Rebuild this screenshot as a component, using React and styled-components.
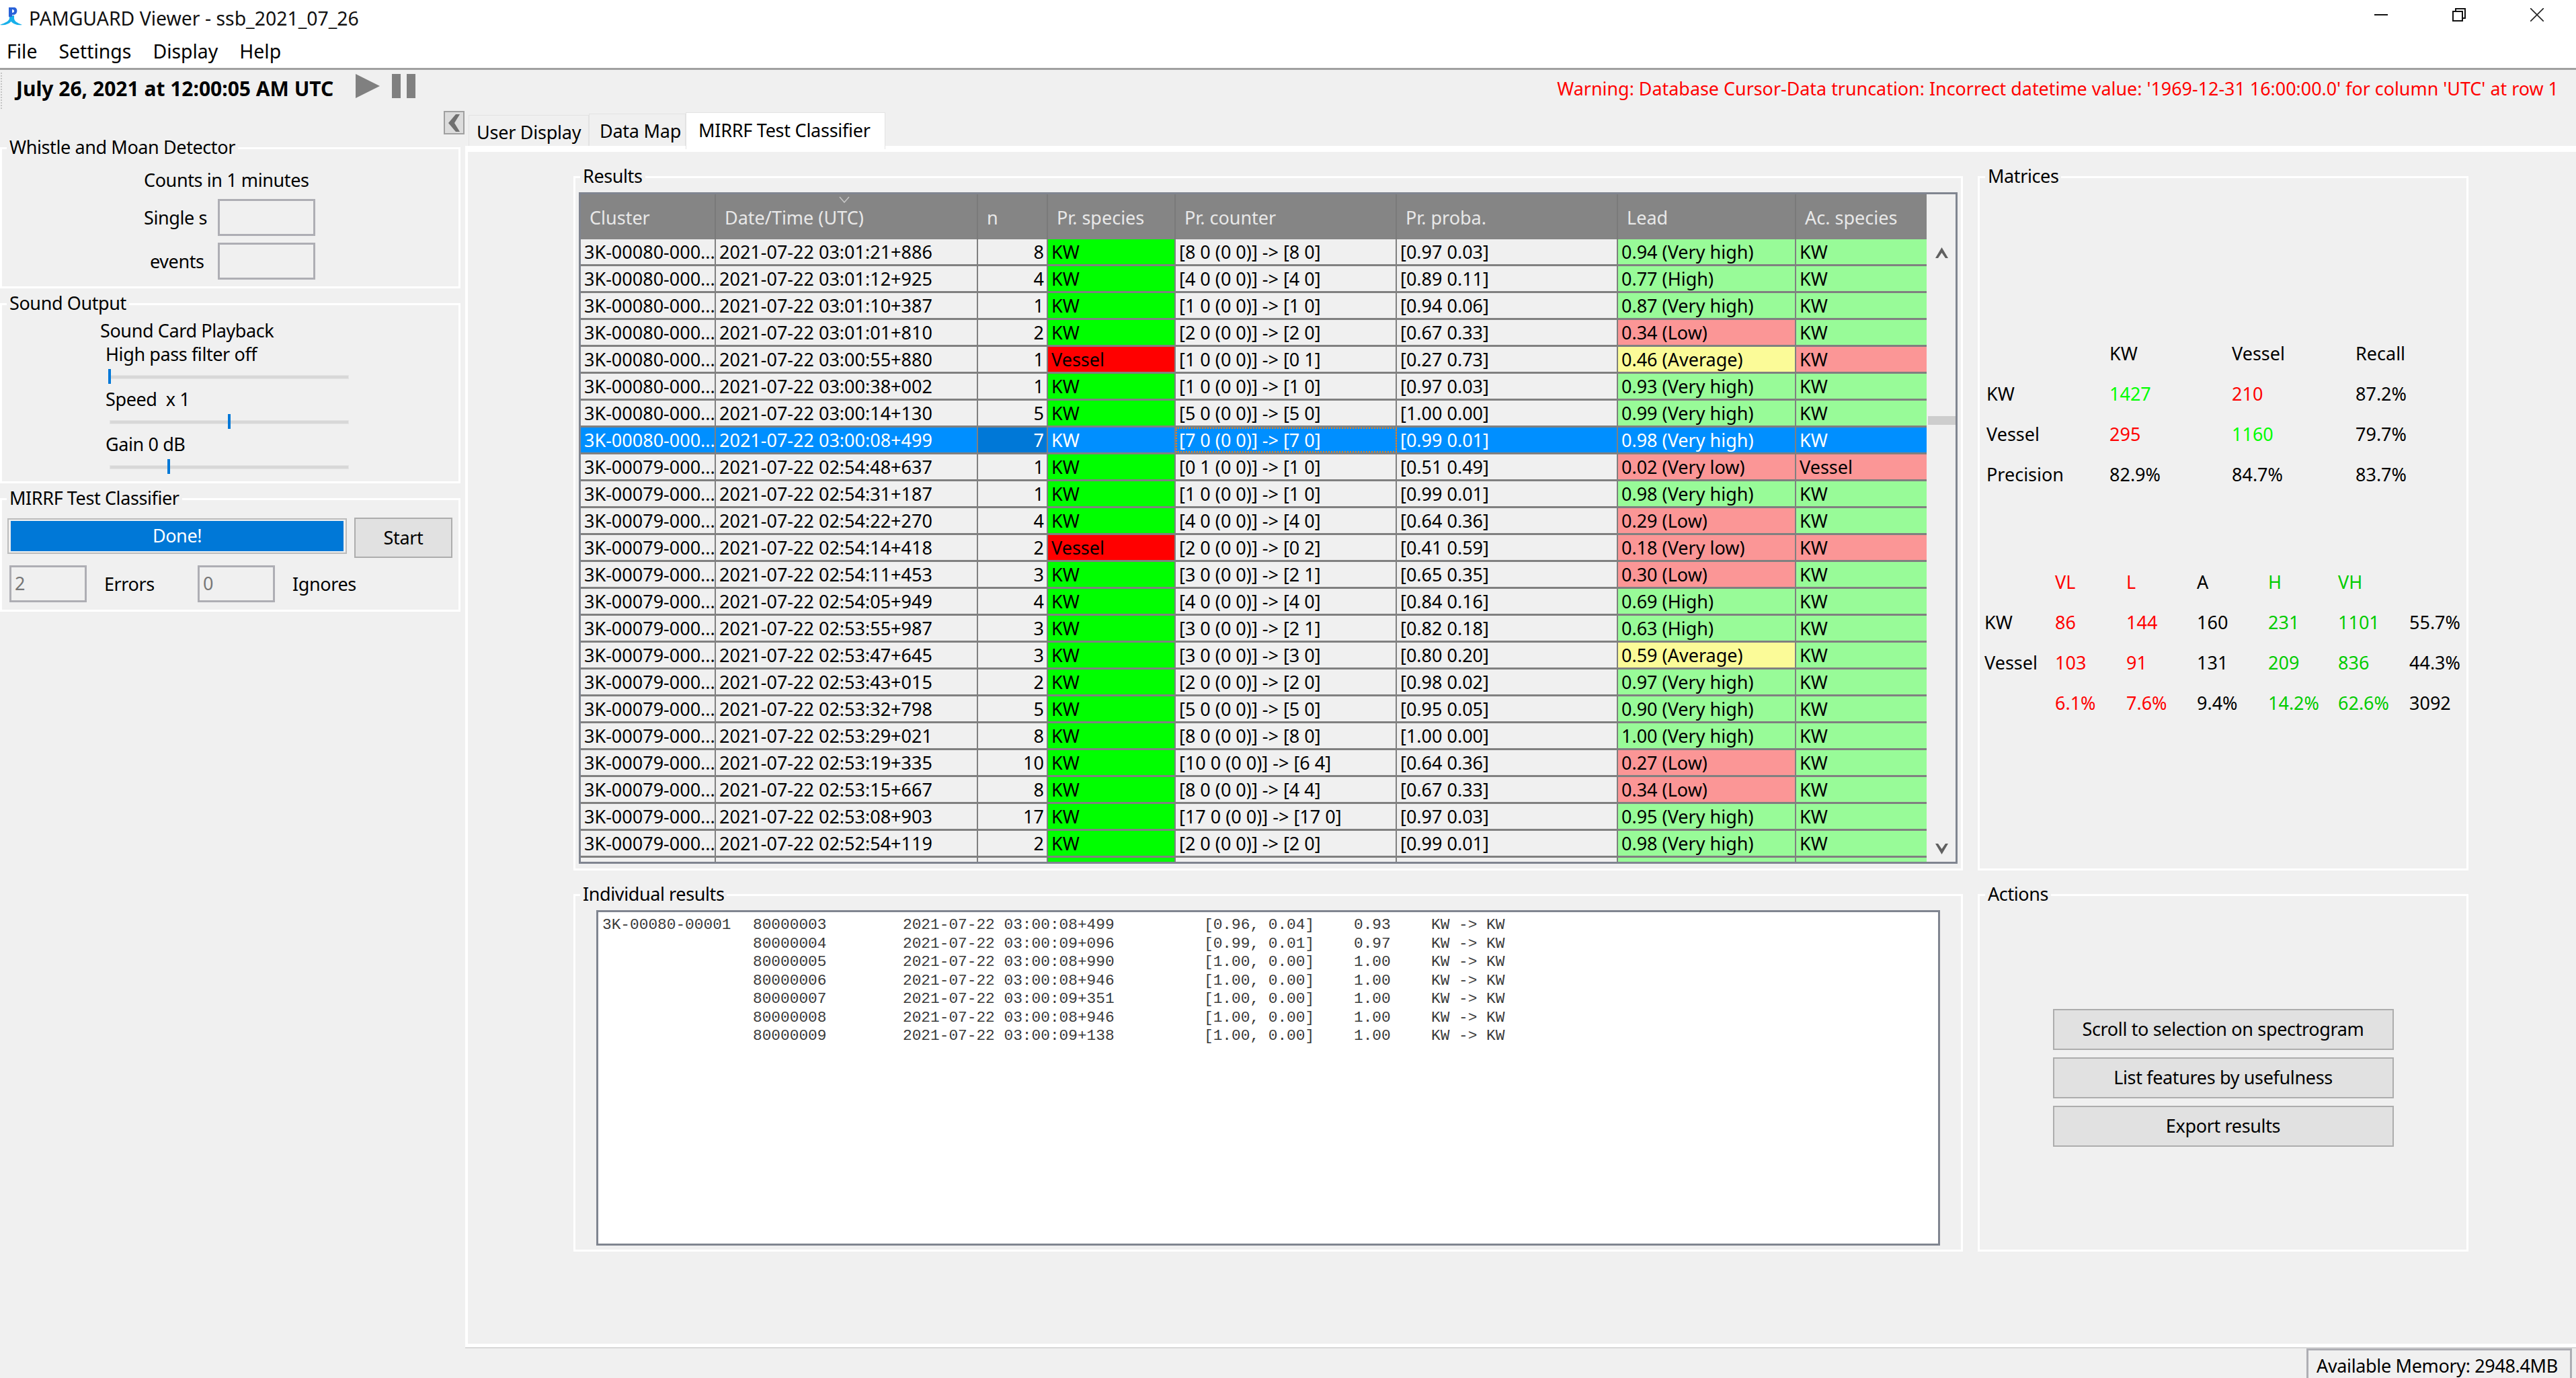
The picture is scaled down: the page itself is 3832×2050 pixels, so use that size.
import React from "react";
import styled, { createGlobalStyle } from "styled-components";

const GlobalStyle = createGlobalStyle`
  html, body { margin: 0; padding: 0; background: #f0f0f0; }
  * { box-sizing: border-box; }
`;

const FONT = `"Noto Sans", "Open Sans", sans-serif`;

const App_ = styled.div`
  width: 3832px;
  height: 2050px;
  display: flex;
  flex-direction: column;
  overflow: hidden;
  background: #f0f0f0;
  color: #000;
  font: 27px/32px ${FONT};
`;

const TitleBar = styled.div`
  height: 54px;
  background: #fff;
  display: flex;
  align-items: center;
  flex-shrink: 0;
`;
const TitleText = styled.span`
  margin-left: 10px;
  font-size: 28.4px;
  color: #111;
`;
const WindowButtons = styled.div`
  margin-left: auto;
  display: flex;
  gap: 96px;
  padding-right: 48px;
  margin-top: -10px;
`;
const MenuBar = styled.div`
  height: 50px;
  background: #fff;
  border-bottom: 3px solid #a0a0a0;
  display: flex;
  gap: 32px;
  padding: 0 0 4px 10px;
  align-items: center;
  flex-shrink: 0;
  font-size: 28.4px;
`;
const ToolBar = styled.div`
  position: relative;
  height: 56px;
  display: flex;
  align-items: center;
  padding: 0 26px 0 24px;
  flex-shrink: 0;
  &::before {
    content: "";
    position: absolute;
    left: 1px;
    top: 4px;
    bottom: -2px;
    border-left: 2px dotted #c4c4c4;
  }
`;
const DateText = styled.span`
  font-weight: 700;
  font-size: 30px;
  margin-right: 33px;
`;
const Warning = styled.span`
  margin-left: auto;
  color: #f00;
  font-size: 26.9px;
`;
const Transport = styled.div`
  display: flex;
  align-items: center;
  gap: 18px;
  margin-top: -8px;
`;

const Body = styled.div`
  flex: 1;
  display: flex;
  min-height: 0;
`;
const Sidebar = styled.div`
  position: relative;
  width: 692px;
  flex-shrink: 0;
  padding: 59px 7px 0 0;
  display: flex;
  flex-direction: column;
  gap: 22px;
  letter-spacing: -0.4px;
`;
const CollapseButton = styled.div`
  position: absolute;
  left: 660px;
  top: 5px;
  width: 31px;
  height: 35px;
  border: 2px solid #a0a0a0;
  background: #dcdcdc;
  display: flex;
  align-items: center;
  justify-content: center;
`;

const Group = styled.div`
  position: relative;
  height: ${(p) => p.$h}px;
  border: 3px solid #fff;
  padding: ${(p) => p.$pad || "0"};
`;
const GroupTitle = styled.span`
  position: absolute;
  left: ${(p) => p.$left || 7}px;
  top: -19px;
  padding: 0 4px;
  background: #f0f0f0;
  white-space: nowrap;
  letter-spacing: -0.4px;
`;
const CenterLine = styled.div`
  height: 32px;
  white-space: pre;
`;
const FieldRow = styled.div`
  display: grid;
  grid-template-columns: 110px 145px;
  align-items: center;
  margin-top: ${(p) => p.$mt}px;
`;
const FieldLabel = styled.span`
  padding-left: ${(p) => p.$pl || 0}px;
`;
const Field = styled.div`
  width: ${(p) => p.$w}px;
  height: 55px;
  border: 3px solid #aeaeb4;
  color: #777;
  padding: 8px 5px;
  flex-shrink: 0;
`;
const SliderBlock = styled.div`
  padding-left: ${(p) => p.$pl}px;
`;
const Track = styled.div`
  position: relative;
  width: 356px;
  height: 22px;
  margin: 6px 0 7px 6px;
  &::before {
    content: "";
    position: absolute;
    left: 0;
    right: 0;
    top: 9px;
    height: 4px;
    background: #d8d8d8;
    border: 1px solid #e4e4e4;
  }
`;
const Thumb = styled.div`
  position: absolute;
  left: ${(p) => p.$at}px;
  top: 0;
  width: 4px;
  height: 22px;
  background: #0078d7;
`;
const ProgressRow = styled.div`
  display: flex;
  align-items: flex-start;
  gap: 11px;
  padding-left: 8px;
`;
const Progress = styled.div`
  width: 505px;
  height: 53px;
  margin-top: 1px;
  border: 2px solid #bcbcbc;
  padding: 2px 3px;
`;
const ProgressFill = styled.div`
  height: 100%;
  background: #0078d7;
  color: #fff;
  text-align: center;
  line-height: 44px;
`;
const Button = styled.div`
  width: ${(p) => p.$w}px;
  height: ${(p) => p.$h}px;
  background: #e1e1e1;
  border: 2px solid #adadad;
  display: flex;
  align-items: center;
  justify-content: center;
  white-space: nowrap;
  letter-spacing: -0.35px;
`;
const CountRow = styled.div`
  display: flex;
  align-items: center;
  margin-top: 11px;
  padding-left: 11px;
`;
const CountLabel = styled.span`
  width: ${(p) => p.$w}px;
  padding-left: 26px;
`;

const Main = styled.div`
  flex: 1;
  min-width: 0;
  display: flex;
  flex-direction: column;
`;
const TabStrip = styled.div`
  height: 57px;
  display: flex;
  align-items: flex-end;
  padding-left: 5px;
  flex-shrink: 0;
  position: relative;
  z-index: 1;
`;
const Tab = styled.div`
  height: ${(p) => (p.$active ? 55 : p.$h)}px;
  width: ${(p) => p.$w}px;
  margin-bottom: ${(p) => (p.$active ? -5 : 0)}px;
  background: ${(p) => (p.$active ? "#fff" : "#f0f0f0")};
  border: 1px solid #e3e3e3;
  border-bottom: 0;
  padding: ${(p) => (p.$active ? "10px 0 0 18px" : "9px 0 0 " + p.$pl + "px")};
  white-space: nowrap;
  letter-spacing: -0.25px;
`;
const Pane = styled.div`
  flex: 1;
  min-height: 0;
  border-top: 9px solid #fff;
  border-left: 4px solid #fff;
  border-bottom: 5px solid #fff;
  padding: 36px 0 0 157px;
  display: grid;
  grid-template-columns: 2067px 730px;
  grid-template-rows: 1033px 532px;
  column-gap: 22px;
  row-gap: 35px;
`;
const StatusBar = styled.div`
  height: 46px;
  flex-shrink: 0;
  border-top: 2px solid #d8d8d8;
  display: flex;
  justify-content: flex-end;
  padding-right: 6px;
`;
const MemoryBox = styled.div`
  width: 395px;
  padding: 7px 0 0 12px;
  border: 3px solid #aeaeb4;
  border-bottom: 0;
  white-space: nowrap;
  letter-spacing: -0.35px;
`;

const TableFrame = styled.div`
  position: absolute;
  left: 5px;
  top: 21px;
  width: 2051px;
  height: 999px;
  border: 3px solid #808590;
  display: flex;
`;
const TableBody = styled.div`
  width: 2002px;
  overflow: hidden;
  flex-shrink: 0;
`;
const COLUMNS = "201px 390px 104px 190px 329px 329px 265px 194px";
const HeaderRow = styled.div`
  height: 67px;
  display: grid;
  grid-template-columns: ${COLUMNS};
  background: #858585;
`;
const HeaderCell = styled.div`
  position: relative;
  color: #e8e8e8;
  padding: 19px 0 0 13px;
  border-right: 2px solid #7a7a7a;
  white-space: nowrap;
  font-size: 27px;
  &:last-child {
    border-right: 0;
  }
`;
const SortMark = styled.svg`
  position: absolute;
  left: 183px;
  top: 3px;
`;
const Row = styled.div`
  height: 40px;
  display: grid;
  grid-template-columns: ${COLUMNS};
  border-bottom: 3px solid #808080;
`;
const Cell = styled.div`
  background: ${(p) => p.$bg || "#f0f0f0"};
  color: ${(p) => p.$color || "#000"};
  border-right: 2px solid #808080;
  padding: 0 4px 0 5px;
  line-height: 37px;
  white-space: nowrap;
  overflow: hidden;
  text-align: ${(p) => p.$align || "left"};
  outline: ${(p) => (p.$focus ? "2px dotted #e8801a" : "none")};
  outline-offset: -2px;
  &:last-child {
    border-right: 0;
  }
`;
const Scrollbar = styled.div`
  flex: 1;
  position: relative;
  background: #f0f0f0;
`;
const ScrollArrow = styled.svg`
  position: absolute;
  left: 13px;
  top: ${(p) => p.$top}px;
`;
const ScrollThumb = styled.div`
  position: absolute;
  left: 2px;
  right: 0;
  top: 330px;
  height: 13px;
  background: #cdcdcd;
`;

const MatrixGrid = styled.div`
  display: grid;
  grid-template-columns: ${(p) => p.$cols};
  grid-auto-rows: 60px;
  align-items: center;
  margin: ${(p) => p.$margin};
  white-space: nowrap;
`;
const MatrixCell = styled.span`
  color: ${(p) => p.$color || "#000"};
`;

const LogBox = styled.div`
  position: absolute;
  left: 31px;
  top: 21px;
  width: 1999px;
  height: 499px;
  background: #fff;
  border: 3px solid #808590;
  padding: 6px 0 0 6px;
  font: 22.8px/27.5px "Liberation Mono", monospace;
  color: #3a3a3a;
`;
const LogRow = styled.div`
  display: grid;
  grid-template-columns: 224px 223px 448px 223px 115px auto;
  white-space: pre;
`;
const Actions = styled.div`
  height: 100%;
  display: flex;
  flex-direction: column;
  align-items: center;
  justify-content: center;
  gap: 11px;
  padding-top: 14px;
`;

const GREEN = "#00ff00";
const RED = "#ff0000";
const LIGHT_GREEN = "#98fb98";
const LIGHT_RED = "#fb9696";
const YELLOW = "#fbfb98";
const SELECT = "#008fff";

const headers = ["Cluster", "Date/Time (UTC)", "n", "Pr. species", "Pr. counter", "Pr. proba.", "Lead", "Ac. species"];

const rows = [
  ["3K-00080-000...", "2021-07-22 03:01:21+886", 8, "KW", "[8 0 (0 0)] -> [8 0]", "[0.97 0.03]", "0.94 (Very high)", "KW"],
  ["3K-00080-000...", "2021-07-22 03:01:12+925", 4, "KW", "[4 0 (0 0)] -> [4 0]", "[0.89 0.11]", "0.77 (High)", "KW"],
  ["3K-00080-000...", "2021-07-22 03:01:10+387", 1, "KW", "[1 0 (0 0)] -> [1 0]", "[0.94 0.06]", "0.87 (Very high)", "KW"],
  ["3K-00080-000...", "2021-07-22 03:01:01+810", 2, "KW", "[2 0 (0 0)] -> [2 0]", "[0.67 0.33]", "0.34 (Low)", "KW"],
  ["3K-00080-000...", "2021-07-22 03:00:55+880", 1, "Vessel", "[1 0 (0 0)] -> [0 1]", "[0.27 0.73]", "0.46 (Average)", "KW"],
  ["3K-00080-000...", "2021-07-22 03:00:38+002", 1, "KW", "[1 0 (0 0)] -> [1 0]", "[0.97 0.03]", "0.93 (Very high)", "KW"],
  ["3K-00080-000...", "2021-07-22 03:00:14+130", 5, "KW", "[5 0 (0 0)] -> [5 0]", "[1.00 0.00]", "0.99 (Very high)", "KW"],
  ["3K-00080-000...", "2021-07-22 03:00:08+499", 7, "KW", "[7 0 (0 0)] -> [7 0]", "[0.99 0.01]", "0.98 (Very high)", "KW"],
  ["3K-00079-000...", "2021-07-22 02:54:48+637", 1, "KW", "[0 1 (0 0)] -> [1 0]", "[0.51 0.49]", "0.02 (Very low)", "Vessel"],
  ["3K-00079-000...", "2021-07-22 02:54:31+187", 1, "KW", "[1 0 (0 0)] -> [1 0]", "[0.99 0.01]", "0.98 (Very high)", "KW"],
  ["3K-00079-000...", "2021-07-22 02:54:22+270", 4, "KW", "[4 0 (0 0)] -> [4 0]", "[0.64 0.36]", "0.29 (Low)", "KW"],
  ["3K-00079-000...", "2021-07-22 02:54:14+418", 2, "Vessel", "[2 0 (0 0)] -> [0 2]", "[0.41 0.59]", "0.18 (Very low)", "KW"],
  ["3K-00079-000...", "2021-07-22 02:54:11+453", 3, "KW", "[3 0 (0 0)] -> [2 1]", "[0.65 0.35]", "0.30 (Low)", "KW"],
  ["3K-00079-000...", "2021-07-22 02:54:05+949", 4, "KW", "[4 0 (0 0)] -> [4 0]", "[0.84 0.16]", "0.69 (High)", "KW"],
  ["3K-00079-000...", "2021-07-22 02:53:55+987", 3, "KW", "[3 0 (0 0)] -> [2 1]", "[0.82 0.18]", "0.63 (High)", "KW"],
  ["3K-00079-000...", "2021-07-22 02:53:47+645", 3, "KW", "[3 0 (0 0)] -> [3 0]", "[0.80 0.20]", "0.59 (Average)", "KW"],
  ["3K-00079-000...", "2021-07-22 02:53:43+015", 2, "KW", "[2 0 (0 0)] -> [2 0]", "[0.98 0.02]", "0.97 (Very high)", "KW"],
  ["3K-00079-000...", "2021-07-22 02:53:32+798", 5, "KW", "[5 0 (0 0)] -> [5 0]", "[0.95 0.05]", "0.90 (Very high)", "KW"],
  ["3K-00079-000...", "2021-07-22 02:53:29+021", 8, "KW", "[8 0 (0 0)] -> [8 0]", "[1.00 0.00]", "1.00 (Very high)", "KW"],
  ["3K-00079-000...", "2021-07-22 02:53:19+335", 10, "KW", "[10 0 (0 0)] -> [6 4]", "[0.64 0.36]", "0.27 (Low)", "KW"],
  ["3K-00079-000...", "2021-07-22 02:53:15+667", 8, "KW", "[8 0 (0 0)] -> [4 4]", "[0.67 0.33]", "0.34 (Low)", "KW"],
  ["3K-00079-000...", "2021-07-22 02:53:08+903", 17, "KW", "[17 0 (0 0)] -> [17 0]", "[0.97 0.03]", "0.95 (Very high)", "KW"],
  ["3K-00079-000...", "2021-07-22 02:52:54+119", 2, "KW", "[2 0 (0 0)] -> [2 0]", "[0.99 0.01]", "0.98 (Very high)", "KW"],
  ["3K-00079-000...", "2021-07-22 02:52:47+310", 3, "KW", "[3 0 (0 0)] -> [3 0]", "[0.99 0.01]", "0.98 (Very high)", "KW"],
];

const SELECTED = 7;

const leadColor = (lead) => {
  if (lead.includes("Low") || lead.includes("low")) return LIGHT_RED;
  if (lead.includes("Average")) return YELLOW;
  return LIGHT_GREEN;
};

const logRows = [
  ["3K-00080-00001", "80000003", "2021-07-22 03:00:08+499", "[0.96, 0.04]", "0.93"],
  ["", "80000004", "2021-07-22 03:00:09+096", "[0.99, 0.01]", "0.97"],
  ["", "80000005", "2021-07-22 03:00:08+990", "[1.00, 0.00]", "1.00"],
  ["", "80000006", "2021-07-22 03:00:08+946", "[1.00, 0.00]", "1.00"],
  ["", "80000007", "2021-07-22 03:00:09+351", "[1.00, 0.00]", "1.00"],
  ["", "80000008", "2021-07-22 03:00:08+946", "[1.00, 0.00]", "1.00"],
  ["", "80000009", "2021-07-22 03:00:09+138", "[1.00, 0.00]", "1.00"],
];

const DARK_GREEN = "#00cc00";
const confusion = [
  [[""], ["KW"], ["Vessel"], ["Recall"]],
  [["KW"], ["1427", GREEN], ["210", RED], ["87.2%"]],
  [["Vessel"], ["295", RED], ["1160", GREEN], ["79.7%"]],
  [["Precision"], ["82.9%"], ["84.7%"], ["83.7%"]],
];
const leadTable = [
  [[""], ["VL", RED], ["L", RED], ["A"], ["H", DARK_GREEN], ["VH", DARK_GREEN], [""]],
  [["KW"], ["86", RED], ["144", RED], ["160"], ["231", DARK_GREEN], ["1101", DARK_GREEN], ["55.7%"]],
  [["Vessel"], ["103", RED], ["91", RED], ["131"], ["209", DARK_GREEN], ["836", DARK_GREEN], ["44.3%"]],
  [[""], ["6.1%", RED], ["7.6%", RED], ["9.4%"], ["14.2%", DARK_GREEN], ["62.6%", DARK_GREEN], ["3092"]],
];

function Logo() {
  return (
    <svg width="33" height="28" viewBox="0 0 33 28" style={{ marginTop: -4 }}>
      <path d="M14 12 L14 16 C14 20 8 23 0 26 C7 27 13 25 16.5 21 C20 25 26 27 33 26 C25 23 21 20 21 16 L21 12 Z" fill="#18b0ea" />
      <path d="M13 0 L21 0 C27 0 27 11 20 11 L18 11 L18 14 L13 14 Z M18 3 L18 8 C22 8 22 3 18 3 Z" fill="#2a62d8" fillRule="evenodd" />
    </svg>
  );
}

function WindowControls() {
  return (
    <WindowButtons>
      <svg width="20" height="20" viewBox="0 0 20 20">
        <path d="M0 10 H20" stroke="#111" strokeWidth="2" />
      </svg>
      <svg width="20" height="20" viewBox="0 0 20 20" fill="none" stroke="#111" strokeWidth="2">
        <rect x="1" y="5" width="14" height="14" />
        <path d="M5 5 V1 H19 V15 H15" />
      </svg>
      <svg width="20" height="20" viewBox="0 0 20 20">
        <path d="M0 0 L20 20 M20 0 L0 20" stroke="#222" strokeWidth="1.6" />
      </svg>
    </WindowButtons>
  );
}

function Slider({ label, at }) {
  return (
    <SliderBlock $pl={154}>
      <CenterLine>{label}</CenterLine>
      <Track>
        <Thumb $at={at} />
      </Track>
    </SliderBlock>
  );
}

export default function App() {
  return (
    <App_>
      <GlobalStyle />
      <TitleBar>
        <Logo />
        <TitleText>PAMGUARD Viewer - ssb_2021_07_26</TitleText>
        <WindowControls />
      </TitleBar>
      <MenuBar>
        <span>File</span>
        <span>Settings</span>
        <span>Display</span>
        <span>Help</span>
      </MenuBar>
      <ToolBar>
        <DateText>July 26, 2021 at 12:00:05 AM UTC</DateText>
        <Transport>
          <svg width="36" height="36" viewBox="0 0 36 36">
            <path d="M0 0 L36 18 L0 36 Z" fill="#808080" />
          </svg>
          <svg width="35" height="36" viewBox="0 0 35 36">
            <path d="M0 0 H13 V36 H0 Z M22 0 H35 V36 H22 Z" fill="#808080" />
          </svg>
        </Transport>
        <Warning>
          Warning: Database Cursor-Data truncation: Incorrect datetime value: '1969-12-31 16:00:00.0' for column 'UTC' at row 1
        </Warning>
      </ToolBar>
      <Body>
        <Sidebar>
          <CollapseButton>
            <svg width="20" height="26" viewBox="0 0 20 26">
              <path d="M12 0 L1 13 L12 26 L18 26 L10 13 L18 0 Z" fill="#707070" />
            </svg>
          </CollapseButton>
          <Group $h={210} $pad="30px 0 0 211px">
            <GroupTitle>Whistle and Moan Detector</GroupTitle>
            <CenterLine>Counts in 1 minutes</CenterLine>
            <FieldRow $mt={12}>
              <FieldLabel>Single s</FieldLabel>
              <Field $w={145} />
            </FieldRow>
            <FieldRow $mt={10}>
              <FieldLabel $pl={9}>events</FieldLabel>
              <Field $w={145} />
            </FieldRow>
          </Group>
          <Group $h={268} $pad="22px 0 0 0">
            <GroupTitle>Sound Output</GroupTitle>
            <SliderBlock $pl={146}>
              <CenterLine>Sound Card Playback</CenterLine>
            </SliderBlock>
            <div style={{ height: 3 }} />
            <Slider label="High pass filter off" at={-2} />
            <Slider label="Speed  x 1" at={176} />
            <Slider label="Gain 0 dB" at={86} />
          </Group>
          <Group $h={169} $pad="26px 0 0 0">
            <GroupTitle>MIRRF Test Classifier</GroupTitle>
            <ProgressRow>
              <Progress>
                <ProgressFill>Done!</ProgressFill>
              </Progress>
              <Button $w={146} $h={60}>
                Start
              </Button>
            </ProgressRow>
            <CountRow>
              <Field $w={115}>2</Field>
              <CountLabel $w={165}>Errors</CountLabel>
              <Field $w={115}>0</Field>
              <CountLabel $w={200}>Ignores</CountLabel>
            </CountRow>
          </Group>
        </Sidebar>
        <Main>
          <TabStrip>
            <Tab $w={179} $h={46} $pl={11}>
              User Display
            </Tab>
            <Tab $w={144} $h={48} $pl={15}>
              Data Map
            </Tab>
            <Tab $w={297} $active>
              MIRRF Test Classifier
            </Tab>
          </TabStrip>
          <Pane>
            <Group>
              <GroupTitle>Results</GroupTitle>
              <TableFrame>
                <TableBody>
                  <HeaderRow>
                    {headers.map((h, i) => (
                      <HeaderCell key={h}>
                        {h}
                        {i === 1 && (
                          <SortMark width="16" height="10" viewBox="0 0 16 10">
                            <path d="M1 1 L8 9 L15 1" fill="none" stroke="#c8c8c8" strokeWidth="1.5" />
                          </SortMark>
                        )}
                      </HeaderCell>
                    ))}
                  </HeaderRow>
                  {rows.map((r, i) => {
                    const sel = i === SELECTED;
                    const text = sel ? "#fff" : "#000";
                    const plain = sel ? SELECT : undefined;
                    const acBad = r[3] !== r[7];
                    return (
                      <Row key={i}>
                        <Cell $bg={plain} $color={text}>{r[0]}</Cell>
                        <Cell $bg={plain} $color={text}>{r[1]}</Cell>
                        <Cell $bg={sel ? "#0078d7" : undefined} $color={text} $align="right">{r[2]}</Cell>
                        <Cell $bg={plain || (r[3] === "KW" ? GREEN : RED)} $color={text}>{r[3]}</Cell>
                        <Cell $bg={plain} $color={text} $focus={sel}>{r[4]}</Cell>
                        <Cell $bg={plain} $color={text}>{r[5]}</Cell>
                        <Cell $bg={plain || leadColor(r[6])} $color={text}>{r[6]}</Cell>
                        <Cell $bg={plain || (acBad ? LIGHT_RED : LIGHT_GREEN)} $color={text}>{r[7]}</Cell>
                      </Row>
                    );
                  })}
                </TableBody>
                <Scrollbar>
                  <ScrollArrow $top={79} width="19" height="16" viewBox="0 0 19 16">
                    <path d="M9.5 0 L19 16 L15 16 L9.5 8 L4 16 L0 16 Z" fill="#606060" />
                  </ScrollArrow>
                  <ScrollThumb />
                  <ScrollArrow $top={966} width="19" height="16" viewBox="0 0 19 16">
                    <path d="M9.5 16 L19 0 L15 0 L9.5 8 L4 0 L0 0 Z" fill="#606060" />
                  </ScrollArrow>
                </Scrollbar>
              </TableFrame>
            </Group>
            <Group>
              <GroupTitle $left={8}>Matrices</GroupTitle>
              <MatrixGrid $cols="183px 182px 184px auto" $margin="231px 0 0 10px">
                {confusion.flat().map((c, i) => (
                  <MatrixCell key={i} $color={c[1]}>{c[0]}</MatrixCell>
                ))}
              </MatrixGrid>
              <MatrixGrid $cols="105px 106px 105px 106px 104px 106px auto" $margin="100px 0 0 7px">
                {leadTable.flat().map((c, i) => (
                  <MatrixCell key={i} $color={c[1]}>{c[0]}</MatrixCell>
                ))}
              </MatrixGrid>
            </Group>
            <Group>
              <GroupTitle>Individual results</GroupTitle>
              <LogBox>
                {logRows.map((l, i) => (
                  <LogRow key={i}>
                    <span>{l[0]}</span>
                    <span>{l[1]}</span>
                    <span>{l[2]}</span>
                    <span>{l[3]}</span>
                    <span>{l[4]}</span>
                    <span>KW -&gt; KW</span>
                  </LogRow>
                ))}
              </LogBox>
            </Group>
            <Group>
              <GroupTitle $left={8}>Actions</GroupTitle>
              <Actions>
                <Button $w={507} $h={61}>Scroll to selection on spectrogram</Button>
                <Button $w={507} $h={61}>List features by usefulness</Button>
                <Button $w={507} $h={61}>Export results</Button>
              </Actions>
            </Group>
          </Pane>
          <StatusBar>
            <MemoryBox>Available Memory: 2948.4MB</MemoryBox>
          </StatusBar>
        </Main>
      </Body>
    </App_>
  );
}
